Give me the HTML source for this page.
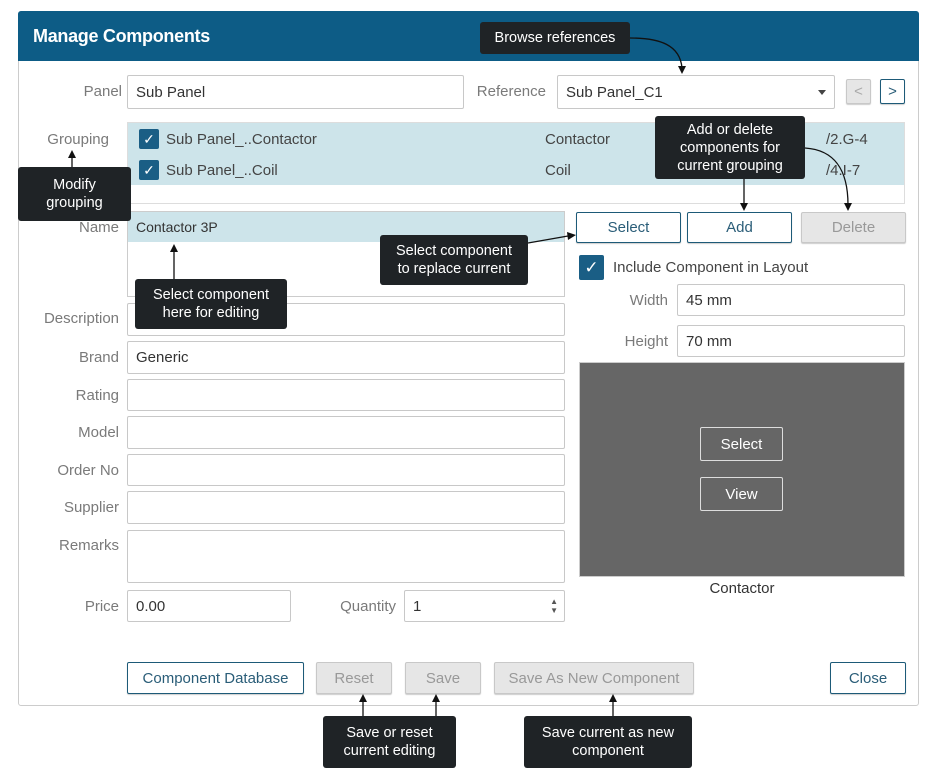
<!DOCTYPE html>
<html><head><style>
body{margin:0;width:937px;height:779px;background:#fff;font-family:"Liberation Sans",sans-serif;position:relative;overflow:hidden}
.a{position:absolute;box-sizing:border-box}
.lbl{position:absolute;color:#7a7a7a;font-size:15px;text-align:right}
.in{position:absolute;box-sizing:border-box;border:1px solid #c8c8c8;border-radius:2px;background:#fff;font-size:15px;color:#333;padding-left:8px;display:flex;align-items:center}
.btn{position:absolute;box-sizing:border-box;border:1px solid #1d5a78;border-radius:2px;background:#fff;color:#2a5d78;font-size:15px;display:flex;align-items:center;justify-content:center;box-shadow:0 1px 1px rgba(0,0,0,.2)}
.dis{border-color:#c8c8c8;background:#e6e6e6;color:#999}
.tip{position:absolute;box-sizing:border-box;background:#1f2326;color:#fff;font-size:14.5px;text-align:center;border-radius:3px;display:flex;align-items:center;justify-content:center;line-height:18px}
.cb{position:absolute;width:20px;height:20px;background:#1a5e85;border-radius:2px;color:#fff;font-size:14px;text-align:center;line-height:20px}
.gw{position:absolute;box-sizing:border-box;border:1px solid #ddd;border-radius:2px;color:#fff;font-size:15px;display:flex;align-items:center;justify-content:center;background:#666}
</style></head><body>
<div class="a" style="left:18px;top:11px;width:901px;height:695px;border:1px solid #ccc;border-radius:3px"></div>
<div class="a" style="left:18px;top:11px;width:901px;height:50px;background:#0d5c86;border-radius:3px 3px 0 0"></div>
<div class="a" style="left:33px;top:26px;color:#fff;font-weight:bold;font-size:18px;letter-spacing:-0.3px">Manage Components</div>

<div class="lbl" style="right:815px;top:83px">Panel</div>
<div class="in" style="left:127px;top:75px;width:337px;height:34px">Sub Panel</div>
<div class="lbl" style="right:391px;top:83px">Reference</div>
<div class="in" style="left:557px;top:75px;width:278px;height:34px">Sub Panel_C1<span style="position:absolute;right:8px;top:14px;border:4px solid transparent;border-top:5px solid #444"></span></div>
<div class="btn dis" style="left:846px;top:79px;width:25px;height:25px;color:#aaa">&lt;</div>
<div class="btn" style="left:880px;top:79px;width:25px;height:25px">&gt;</div>

<div class="lbl" style="right:828px;top:131px">Grouping</div>
<div class="a" style="left:127px;top:122px;width:778px;height:82px;border:1px solid #ddd"></div>
<div class="a" style="left:128px;top:123px;width:776px;height:62px;background:#cde4ea"></div>
<div class="cb" style="left:139px;top:129px">✓</div>
<div class="cb" style="left:139px;top:160px">✓</div>
<div class="a" style="left:166px;top:131px;font-size:15px;color:#444">Sub Panel_..Contactor</div>
<div class="a" style="left:166px;top:162px;font-size:15px;color:#444">Sub Panel_..Coil</div>
<div class="a" style="left:545px;top:131px;font-size:15px;color:#444">Contactor</div>
<div class="a" style="left:545px;top:162px;font-size:15px;color:#444">Coil</div>
<div class="a" style="left:826px;top:131px;font-size:15px;color:#444">/2.G-4</div>
<div class="a" style="left:826px;top:162px;font-size:15px;color:#444">/4.I-7</div>

<div class="lbl" style="right:818px;top:219px">Name</div>
<div class="a" style="left:127px;top:211px;width:438px;height:86px;border:1px solid #ccc"></div>
<div class="a" style="left:128px;top:212px;width:436px;height:30px;background:#cde4ea;font-size:14px;color:#333;padding:7px 8px">Contactor 3P</div>
<div class="btn" style="left:576px;top:212px;width:105px;height:31px">Select</div>
<div class="btn" style="left:687px;top:212px;width:105px;height:31px">Add</div>
<div class="btn dis" style="left:801px;top:212px;width:105px;height:31px">Delete</div>
<div class="cb" style="left:579px;top:255px;width:25px;height:25px;line-height:25px;font-size:17px">✓</div>
<div class="a" style="left:613px;top:259px;font-size:15px;color:#444">Include Component in Layout</div>
<div class="lbl" style="right:269px;top:292px">Width</div>
<div class="in" style="left:677px;top:284px;width:228px;height:32px">45 mm</div>
<div class="lbl" style="right:269px;top:333px">Height</div>
<div class="in" style="left:677px;top:325px;width:228px;height:32px">70 mm</div>
<div class="a" style="left:579px;top:362px;width:326px;height:215px;background:#666;border:1px solid #ccc"></div>
<div class="gw" style="left:700px;top:427px;width:83px;height:34px">Select</div>
<div class="gw" style="left:700px;top:477px;width:83px;height:34px">View</div>
<div class="a" style="left:579px;top:580px;width:326px;text-align:center;font-size:15px;color:#333">Contactor</div>

<div class="lbl" style="right:818px;top:310px">Description</div>
<div class="in" style="left:127px;top:303px;width:438px;height:33px"></div>
<div class="lbl" style="right:818px;top:349px">Brand</div>
<div class="in" style="left:127px;top:341px;width:438px;height:33px">Generic</div>
<div class="lbl" style="right:818px;top:387px">Rating</div>
<div class="in" style="left:127px;top:379px;width:438px;height:32px"></div>
<div class="lbl" style="right:818px;top:424px">Model</div>
<div class="in" style="left:127px;top:416px;width:438px;height:33px"></div>
<div class="lbl" style="right:818px;top:462px">Order No</div>
<div class="in" style="left:127px;top:454px;width:438px;height:32px"></div>
<div class="lbl" style="right:818px;top:499px">Supplier</div>
<div class="in" style="left:127px;top:491px;width:438px;height:33px"></div>
<div class="lbl" style="right:818px;top:537px">Remarks</div>
<div class="in" style="left:127px;top:530px;width:438px;height:53px"></div>
<div class="lbl" style="right:818px;top:598px">Price</div>
<div class="in" style="left:127px;top:590px;width:164px;height:32px">0.00</div>
<div class="lbl" style="right:541px;top:598px">Quantity</div>
<div class="in" style="left:404px;top:590px;width:161px;height:32px">1<span style="position:absolute;right:6px;top:6px;font-size:8px;color:#555;line-height:9px">▲<br>▼</span></div>

<div class="btn" style="left:127px;top:662px;width:177px;height:32px">Component Database</div>
<div class="btn dis" style="left:316px;top:662px;width:76px;height:32px">Reset</div>
<div class="btn dis" style="left:405px;top:662px;width:76px;height:32px">Save</div>
<div class="btn dis" style="left:494px;top:662px;width:200px;height:32px">Save As New Component</div>
<div class="btn" style="left:830px;top:662px;width:76px;height:32px">Close</div>

<svg class="a" style="left:0;top:0" width="937" height="779"><g stroke="#111" stroke-width="1.3" fill="none">
<path d="M630 38 C660 38 680 45 682 68"/><path d="M72 167 V155"/><path d="M174 279 V250"/><path d="M528 243 L568 236"/><path d="M744 179 V205"/><path d="M805 148 C835 150 848 170 848 205"/><path d="M363 716 V700"/><path d="M436 716 V700"/><path d="M613 716 V700"/></g>
<g fill="#111"><path d="M678 66 h8 l-4 8z"/><path d="M68 158 h8 l-4 -8z"/><path d="M170 252 h8 l-4 -8z"/><path d="M567 232 l9 3 -8 5z"/><path d="M740 203 h8 l-4 8z"/><path d="M844 203 h8 l-4 8z"/><path d="M359 702 h8 l-4 -8z"/><path d="M432 702 h8 l-4 -8z"/><path d="M609 702 h8 l-4 -8z"/></g></svg>

<div class="tip" style="left:480px;top:22px;width:150px;height:32px">Browse references</div>
<div class="tip" style="left:18px;top:167px;width:113px;height:54px">Modify<br>grouping</div>
<div class="tip" style="left:135px;top:279px;width:152px;height:50px">Select component<br>here for editing</div>
<div class="tip" style="left:380px;top:235px;width:148px;height:50px">Select component<br>to replace current</div>
<div class="tip" style="left:655px;top:116px;width:150px;height:63px">Add or delete<br>components for<br>current grouping</div>
<div class="tip" style="left:323px;top:716px;width:133px;height:52px">Save or reset<br>current editing</div>
<div class="tip" style="left:524px;top:716px;width:168px;height:52px">Save current as new<br>component</div>
</body></html>
